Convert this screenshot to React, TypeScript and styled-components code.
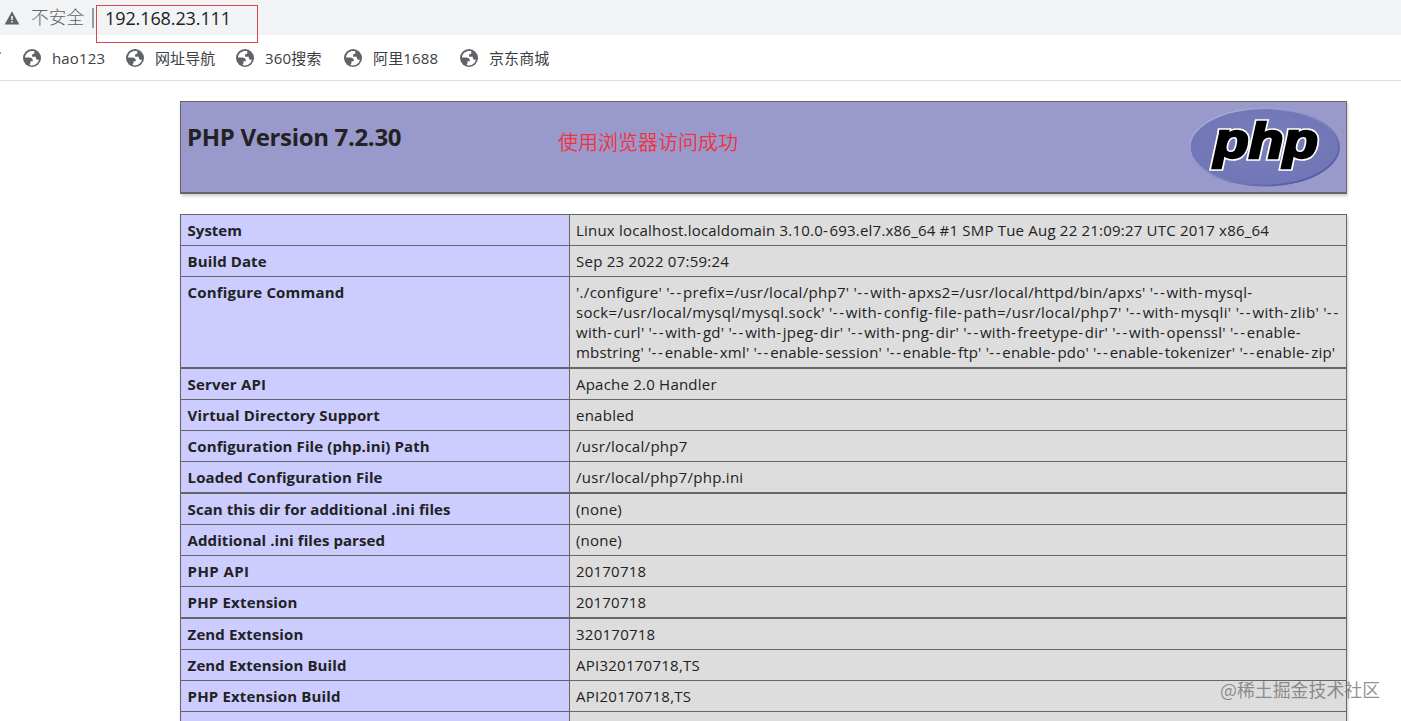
import React from "react";
import styled, { createGlobalStyle } from "styled-components";

const Global = createGlobalStyle`
  html, body { margin: 0; background: #fff; overflow: hidden; }
  body { font-family: "Open Sans", "Noto Sans CJK SC", sans-serif; color: #222; }
`;

const Page = styled.div`
  position: relative;
  width: 1401px;
  height: 721px;
  overflow: hidden;
`;

const AddressBar = styled.div`
  display: flex;
  align-items: center;
  height: 35px;
  box-sizing: border-box;
  padding-left: 4px;
  background: #f1f3f4;
`;

const Insecure = styled.span`
  margin-left: 11px;
  width: 53px;
  font: 300 17.7px/33px "Noto Sans CJK SC", sans-serif;
  padding-bottom: 2px;
  color: #5f6368;
  white-space: nowrap;
`;

const Divider = styled.span`
  width: 2px;
  height: 20px;
  margin: 0 11px 0 8px;
  background: #9a9da0;
`;

const Url = styled.span`
  font-size: 18px;
  line-height: 34px;
  letter-spacing: -0.1px;
  color: #202124;
`;

const UrlHighlight = styled.div`
  position: absolute;
  left: 96px;
  top: 5px;
  width: 162px;
  height: 38px;
  box-sizing: border-box;
  border: 1px solid #d9484b;
`;

const Bookmarks = styled.div`
  position: relative;
  display: flex;
  height: 46px;
  box-sizing: border-box;
  padding-left: 23px;
  border-bottom: 1px solid #dadce0;
  background: #fff;
`;

const CutMark = styled.span`
  position: absolute;
  left: 0;
  top: 17px;
  width: 1px;
  height: 2px;
  background: #999;
`;

const Bookmark = styled.div<{ $width: number }>`
  display: flex;
  align-items: center;
  flex: none;
  width: ${(p) => p.$width}px;
  height: 46px;
  gap: 11px;
  font-size: 15px;
  color: #3c4043;
  white-space: nowrap;
`;

const BookmarkLabel = styled.span<{ $lift: number; $track: number }>`
  font-weight: 400;
  letter-spacing: ${(p) => p.$track}px;
  padding-bottom: ${(p) => p.$lift}px;
`;

const Sheet = styled.main`
  width: 1167px;
  margin: 20px 0 0 180px;
`;

const Banner = styled.header`
  display: flex;
  justify-content: space-between;
  box-sizing: border-box;
  height: 93px;
  padding: 5px 5px 0 6px;
  border: 1px solid #666;
  border-bottom-width: 2px;
  background: #9999cc;
  box-shadow: 1px 2px 3px #ccc;
`;

const Title = styled.h1`
  width: 371px;
  margin: 12px 0 0;
  font-size: 24px;
  line-height: 36px;
  font-weight: 700;
  letter-spacing: -0.33px;
  white-space: nowrap;
`;

const Note = styled.span`
  flex: 1;
  margin-top: 20px;
  font: 350 20px/30px "Noto Sans CJK SC", sans-serif;
  color: #f0323c;
`;

const Table = styled.section`
  margin-top: 20px;
  border: solid #666;
  border-width: 0 1px;
  box-shadow: 1px 2px 3px #ccc;
`;

const Row = styled.div<{ $height: number; $thick?: boolean }>`
  display: grid;
  grid-template-columns: 388px 1fr;
  box-sizing: border-box;
  height: ${(p) => p.$height}px;
  border-top: ${(p) => (p.$thick ? 2 : 1)}px solid #666;
  line-height: 20px;
  white-space: nowrap;
`;

const Key = styled.div<{ $track: number }>`
  padding: 5px 6.6px;
  background: #ccccff;
  font-size: 15px;
  font-weight: 700;
  letter-spacing: ${(p) => p.$track}px;
`;

const Value = styled.div`
  padding: 5px 6px;
  border-left: 1px solid #666;
  background: #ddd;
  font-size: 15px;
`;

const Line = styled.div<{ $track: number }>`
  height: 20px;
  letter-spacing: ${(p) => p.$track}px;
`;

const Hyphen = styled.span`
  letter-spacing: 1.75px;
`;

const Watermark = styled.div`
  position: absolute;
  left: 1220px;
  top: 676px;
  font: 400 17.9px/26px "Noto Sans CJK SC", sans-serif;
  color: rgba(110, 110, 110, 0.75);
  white-space: nowrap;
`;

const LogoText = styled.text`
  font-family: "Liberation Sans", sans-serif;
  font-size: 50px;
  font-weight: 700;
  font-style: italic;
  fill: #000;
`;

const Warning = () => (
  <svg width="16" height="16" viewBox="0 0 16 16">
    <path d="M8 1.2 15.3 14.5H.7Z" fill="#5f6368" />
    <path d="M7.2 6h1.6v4H7.2zM7.2 11h1.6v1.6H7.2z" fill="#f1f3f4" />
  </svg>
);

const Globe = () => (
  <svg width="18" height="18" viewBox="0 0 18 18">
    <circle cx="9" cy="9" r="9" fill="#5f6368" />
    <path
      d="M10.6 2.1C6.5 1.3 2.3 4.2 2 8.6h4.3c2.1 0 3.5 1.2 3.5 3v.7H7.5v2.1h-.6c-.2.8-.2 1.5.3 1.8 3.8 1 7.9-1.4 8.8-5.6-.7.2-1.1.3-1.9.1-1-.3-1.3-1.200-1.3-2.200v-.7H9.1V5.2h.7c1.100 0 1.600-.7 1.500-1.700V2.300Z"
      fill="#fff"
    />
  </svg>
);

const PhpLogo = () => (
  <svg width="152" height="82" viewBox="0 0 152 82">
    <defs>
      <linearGradient id="rim" x1="0" y1="0" x2="1" y2="1">
        <stop offset="0" stopColor="#b4b8e0" />
        <stop offset="0.45" stopColor="#8c90c6" />
        <stop offset="1" stopColor="#3f4691" />
      </linearGradient>
      <radialGradient id="face" cx="0.5" cy="0.45" r="0.6">
        <stop offset="0" stopColor="#7b80bd" />
        <stop offset="1" stopColor="#6f75b5" />
      </radialGradient>
    </defs>
    <ellipse cx="75.5" cy="40" rx="75.5" ry="39.5" fill="url(#rim)" />
    <ellipse cx="75.4" cy="39.9" rx="73.8" ry="37.8" fill="url(#face)" />
    {[
      { stroke: "#fff", width: 5.5 },
      { stroke: "#000", width: 2.5 },
    ].map((s) => (
      <LogoText
        key={s.stroke}
        x="25"
        y="51"
        textLength="104"
        lengthAdjust="spacingAndGlyphs"
        stroke={s.stroke}
        strokeWidth={s.width}
      >
        php
      </LogoText>
    ))}
  </svg>
);

const bookmarks = [
  { label: "hao123", width: 103, lift: 0, track: 0.15 },
  { label: "网址导航", width: 110, lift: 2, track: 0.1 },
  { label: "360搜索", width: 108, lift: 2, track: 0.2 },
  { label: "阿里1688", width: 116, lift: 2, track: 0.15 },
  { label: "京东商城", width: 100, lift: 2, track: 0.1 },
];

type Entry = {
  name: string;
  lines: [string, number][];
  height?: number;
  thick?: boolean;
  track?: number;
};

const entries: Entry[] = [
  { name: "System", track: 0, lines: [["Linux localhost.localdomain 3.10.0-693.el7.x86_64 #1 SMP Tue Aug 22 21:09:27 UTC 2017 x86_64", 0.2]] },
  { name: "Build Date", lines: [["Sep 23 2022 07:59:24", 0.24]] },
  {
    name: "Configure Command",
    track: 0.18,
    height: 91,
    lines: [
      ["'./configure' '--prefix=/usr/local/php7' '--with-apxs2=/usr/local/httpd/bin/apxs' '--with-mysql-", 0.3],
      ["sock=/usr/local/mysql/mysql.sock' '--with-config-file-path=/usr/local/php7' '--with-mysqli' '--with-zlib' '--", 0.33],
      ["with-curl' '--with-gd' '--with-jpeg-dir' '--with-png-dir' '--with-freetype-dir' '--with-openssl' '--enable-", 0.26],
      ["mbstring' '--enable-xml' '--enable-session' '--enable-ftp' '--enable-pdo' '--enable-tokenizer' '--enable-zip'", 0.2],
    ],
  },
  { name: "Server API", track: 0.18, height: 32, thick: true, lines: [["Apache 2.0 Handler", 0.22]] },
  { name: "Virtual Directory Support", track: 0.14, lines: [["enabled", 0.25]] },
  { name: "Configuration File (php.ini) Path", lines: [["/usr/local/php7", 0.3]] },
  { name: "Loaded Configuration File", lines: [["/usr/local/php7/php.ini", 0.28]] },
  { name: "Scan this dir for additional .ini files", track: 0.06, height: 32, thick: true, lines: [["(none)", 0.2]] },
  { name: "Additional .ini files parsed", track: 0.08, lines: [["(none)", 0.2]] },
  { name: "PHP API", track: 0.4, lines: [["20170718", 0.2]] },
  { name: "PHP Extension", track: 0.18, lines: [["20170718", 0.2]] },
  { name: "Zend Extension", height: 32, thick: true, lines: [["320170718", 0.25]] },
  { name: "Zend Extension Build", lines: [["API320170718,TS", 0.25]] },
  { name: "PHP Extension Build", track: 0.15, lines: [["API20170718,TS", 0.26]] },
  { name: "", lines: [] },
];

const spaced = (text: string) =>
  text.split(/(-+)/).map((part, i) => (part.startsWith("-") ? <Hyphen key={i}>{part}</Hyphen> : part));

export default function App() {
  return (
    <Page>
      <Global />
      <AddressBar>
        <Warning />
        <Insecure>不安全</Insecure>
        <Divider />
        <Url>192.168.23.111</Url>
      </AddressBar>
      <Bookmarks>
        <CutMark />
        {bookmarks.map((b) => (
          <Bookmark key={b.label} $width={b.width}>
            <Globe />
            <BookmarkLabel $lift={b.lift} $track={b.track}>{b.label}</BookmarkLabel>
          </Bookmark>
        ))}
      </Bookmarks>
      <Sheet>
        <Banner>
          <Title>PHP Version 7.2.30</Title>
          <Note>使用浏览器访问成功</Note>
          <PhpLogo />
        </Banner>
        <Table>
          {entries.map((e) => (
            <Row key={e.name} $height={e.height ?? 31} $thick={e.thick}>
              <Key $track={e.track ?? 0.11}>{e.name}</Key>
              <Value>
                {e.lines.map(([text, track]) => (
                  <Line key={text} $track={track}>{spaced(text)}</Line>
                ))}
              </Value>
            </Row>
          ))}
        </Table>
      </Sheet>
      <UrlHighlight />
      <Watermark>@稀土掘金技术社区</Watermark>
    </Page>
  );
}
